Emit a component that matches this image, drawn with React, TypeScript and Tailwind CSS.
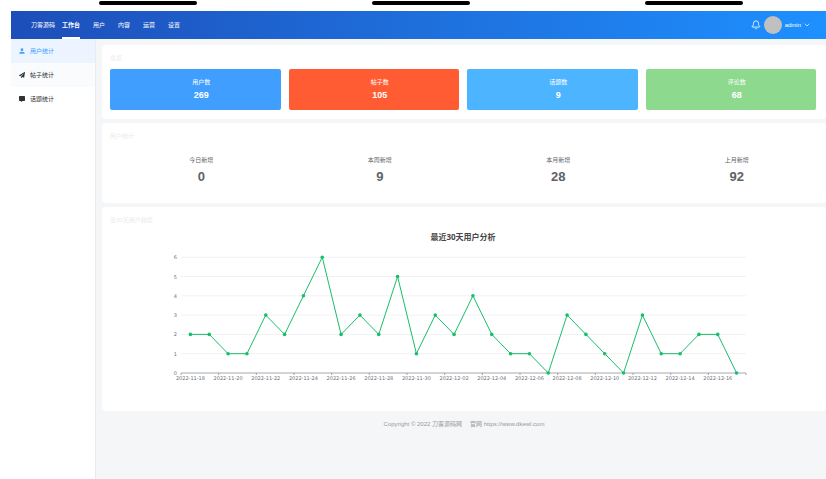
import { FaCommentAlt, FaPaperPlane } from "react-icons/fa";
import { MdPerson } from "react-icons/md";
import { Bell, ChevronDown } from "lucide-react";

const navItems = ["用户", "内容", "运营", "设置"];

const sideItems = [
  { icon: <MdPerson className="w-2 h-2 shrink-0" />, label: "用户统计", style: "bg-[#ecf5ff] text-[#409eff]" },
  { icon: <FaPaperPlane className="w-[6px] h-[6px]" />, label: "帖子统计", style: "bg-[#fafbfd] text-[#303133]" },
  { icon: <FaCommentAlt className="w-[6px] h-[6px]" />, label: "话题统计", style: "text-[#303133]" },
];

const totals = [
  { label: "用户数", value: 269, color: "bg-[#409eff]" },
  { label: "帖子数", value: 105, color: "bg-[#ff5c33]" },
  { label: "话题数", value: 9, color: "bg-[#4db5ff]" },
  { label: "评论数", value: 68, color: "bg-[#8dd98d]" },
];

const growth = [
  { label: "今日新增", value: 0 },
  { label: "本周新增", value: 9 },
  { label: "本月新增", value: 28 },
  { label: "上月新增", value: 92 },
];

const daily = [2, 2, 1, 1, 3, 2, 4, 6, 2, 3, 2, 5, 1, 3, 2, 4, 2, 1, 1, 0, 3, 2, 1, 0, 3, 1, 1, 2, 2, 0];

const dates = [
  "2022-11-18", "2022-11-20", "2022-11-22", "2022-11-24", "2022-11-26",
  "2022-11-28", "2022-11-30", "2022-12-02", "2022-12-04", "2022-12-06",
  "2022-12-08", "2022-12-10", "2022-12-12", "2022-12-14", "2022-12-16",
];

// plot area inside the svg
const left = 71;
const right = 636;
const bottom = 148;
const rowHeight = 19.3;
const step = (right - left) / daily.length;

const pointX = (i: number) => left + step * (i + 0.5);
const pointY = (v: number) => bottom - v * rowHeight;

const Card: React.FC<{ title: string; children: React.ReactNode }> = ({ title, children }) => {
  return (
    <section className="bg-white rounded-sm pl-2 pr-[10px] pt-2 pb-[9px]">
      <h2 className="text-[6px] leading-[10px] text-[#ebebeb]">{title}</h2>
      {children}
    </section>
  );
};

const LineChart: React.FC = () => {
  return (
    <svg viewBox="0 0 706 177" className="block w-full" role="img" aria-label="最近30天用户分析">
      <text x="353" y="15" textAnchor="middle" fontSize="8" fontWeight="bold" fill="#464646" className="font-['Noto_Sans','Noto_Sans_CJK_SC',sans-serif]">最近30天用户分析</text>

      {/* horizontal grid */}
      {[0, 1, 2, 3, 4, 5, 6].map((v) => (
        <g key={v}>
          {v > 0 && <line x1={left} x2={right} y1={pointY(v)} y2={pointY(v)} stroke="#e6e8ee" strokeWidth="0.6" />}
          <text x={left - 4} y={pointY(v) + 2} textAnchor="end" fontSize="5" fill="#6e7079" className="font-['DejaVu_Sans',sans-serif]">{v}</text>
        </g>
      ))}

      {/* x axis */}
      <line x1={left} x2={right} y1={bottom} y2={bottom} stroke="#6e7079" strokeWidth="0.6" />
      {dates.map((date, i) => (
        <g key={date}>
          <line x1={left + step * 2 * i} x2={left + step * 2 * i} y1={bottom} y2={bottom + 2} stroke="#6e7079" strokeWidth="0.6" />
          <text x={pointX(i * 2)} y={bottom + 7} textAnchor="middle" fontSize="5" fill="#6e7079" className="font-['DejaVu_Sans',sans-serif]">{date}</text>
        </g>
      ))}
      <line x1={right} x2={right} y1={bottom} y2={bottom + 2} stroke="#6e7079" strokeWidth="0.6" />

      {/* series */}
      <polyline points={daily.map((v, i) => `${pointX(i)},${pointY(v)}`).join(" ")} fill="none" stroke="#19be6b" strokeWidth="1" />
      {daily.map((v, i) => (
        <circle key={i} cx={pointX(i)} cy={pointY(v)} r="1.8" fill="#19be6b" />
      ))}
    </svg>
  );
};

const App: React.FC = () => {
  return (
    <div className="min-h-screen flex flex-col bg-white text-[6px] leading-[10px] font-['Liberation_Sans','Noto_Sans_CJK_SC',sans-serif]">
      {/* top marks */}
      <div className="h-[11px] flex justify-between pl-[99px] pr-[83px] pt-px">
        <span className="w-[98px] h-1 rounded-full bg-black" />
        <span className="w-[98px] h-1 rounded-full bg-black" />
        <span className="w-[98px] h-1 rounded-full bg-black" />
      </div>

      <div className="ml-[11px] flex-1 flex flex-col">
        {/* header */}
        <header className="h-7 flex items-center pl-5 pr-[15px] text-white bg-linear-to-r from-[#1d4eb9] to-[#1e90ff]">
          <span className="mr-[7px]">刀客源码</span>
          <nav className="self-stretch flex gap-[13px]">
            <a href="#workbench" className="flex items-center font-bold pt-0.5 border-b-2 border-white">工作台</a>
            {navItems.map((item) => (
              <a key={item} href={`#${item}`} className="flex items-center">{item}</a>
            ))}
          </nav>
          <button type="button" aria-label="通知" className="ml-auto mr-[3px]">
            <Bell className="w-[10px] h-[10px]" />
          </button>
          <button type="button" className="flex items-center">
            <span className="w-[18px] h-[18px] mr-[3px] rounded-full bg-[#c0c0c0]" />
            admin
            <ChevronDown className="w-2 h-2 ml-0.5" />
          </button>
        </header>

        <div className="flex-1 flex">
          {/* sidebar */}
          <aside className="w-[85px] shrink-0 border-r border-[#e8ecef]">
            {sideItems.map((item) => (
              <a key={item.label} href={`#${item.label}`} className={`h-6 flex items-center gap-1 pl-[7px] ${item.style}`}>
                <span className="w-2 flex justify-center">{item.icon}</span>
                {item.label}
              </a>
            ))}
          </aside>

          {/* content */}
          <main className="flex-1 flex flex-col gap-1 pl-[6px] pt-[6px] bg-[#f4f6f8]">
            <Card title="总览">
              <div className="grid grid-cols-4 gap-2 mt-[6px]">
                {totals.map((item) => (
                  <div key={item.label} className={`h-[41px] flex flex-col items-center justify-center pl-3 rounded-[2px] text-white ${item.color}`}>
                    <p>{item.label}</p>
                    <p className="text-[9px] leading-4 font-bold">{item.value}</p>
                  </div>
                ))}
              </div>
            </Card>

            <Card title="用户统计">
              <div className="grid grid-cols-4 gap-2 pt-[14px] pb-[9px] text-center text-[#606266]">
                {growth.map((item) => (
                  <div key={item.label} className="pl-3">
                    <p>{item.label}</p>
                    <p className="pt-1 text-[13px] leading-4 font-bold">{item.value}</p>
                  </div>
                ))}
              </div>
            </Card>

            <Card title="近30天用户趋势">
              <LineChart />
            </Card>

            <footer className="flex justify-center gap-2 pt-1 text-[#999]">
              <span>Copyright © 2022 刀客源码网</span>
              <a href="#site">官网 https://www.dkewl.com</a>
            </footer>
          </main>
        </div>
      </div>
    </div>
  );
};

export default App;
